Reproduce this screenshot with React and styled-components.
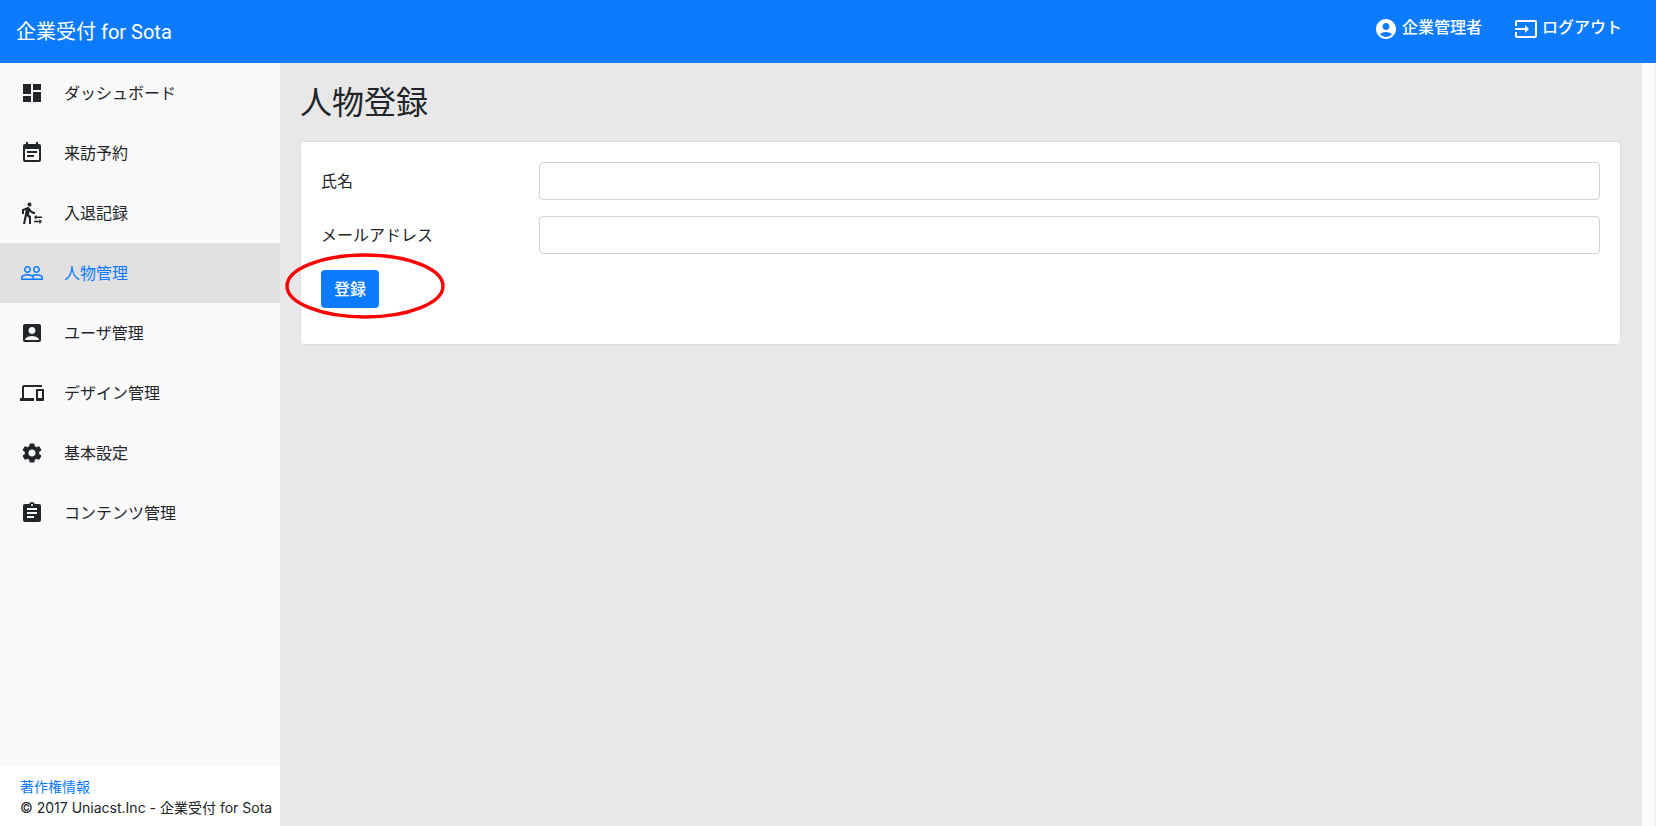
import { useState } from "react";
import styled, { createGlobalStyle } from "styled-components";
import {
  MdAccountBox,
  MdAccountCircle,
  MdAssignment,
  MdDashboard,
  MdDevices,
  MdEventNote,
  MdInput,
  MdPeopleOutline,
  MdSettings,
  MdTransferWithinAStation,
} from "react-icons/md";

const Colors = {
  primary: "#0d7bff",
  text: "#212529",
  sidebar: "#f9f9f9",
  active: "#e0e0e0",
  page: "#e8e8e8",
  marker: "#ff0000",
};

const menu = [
  { label: "ダッシュボード", Icon: MdDashboard },
  { label: "来訪予約", Icon: MdEventNote },
  { label: "入退記録", Icon: MdTransferWithinAStation },
  { label: "人物管理", Icon: MdPeopleOutline, active: true },
  { label: "ユーザ管理", Icon: MdAccountBox },
  { label: "デザイン管理", Icon: MdDevices },
  { label: "基本設定", Icon: MdSettings },
  { label: "コンテンツ管理", Icon: MdAssignment },
];

function App() {
  const [name, setName] = useState("");
  const [email, setEmail] = useState("");

  const handleSubmit = (e) => {
    e.preventDefault();
  };

  return (
    <Page>
      <GlobalStyle />
      <Header>
        <Brand href="#">企業受付 for Sota</Brand>
        <HeaderNav>
          <HeaderLink href="#">
            <MdAccountCircle />
            企業管理者
          </HeaderLink>
          <HeaderLink href="#">
            <MdInput />
            ログアウト
          </HeaderLink>
        </HeaderNav>
      </Header>

      <Body>
        <Sidebar>
          <nav>
            {menu.map(({ label, Icon, active }) => (
              <MenuLink key={label} href="#" $active={active}>
                <Icon />
                {label}
              </MenuLink>
            ))}
          </nav>
          <Footer>
            <a href="#">著作権情報</a>
            <div>© 2017 Uniacst.Inc - 企業受付 for Sota</div>
          </Footer>
        </Sidebar>

        <Main>
          <h1>人物登録</h1>
          <Card onSubmit={handleSubmit}>
            <FormRow>
              <label htmlFor="name">氏名</label>
              <TextInput
                id="name"
                type="text"
                value={name}
                onChange={(e) => setName(e.target.value)}
              />
            </FormRow>
            <FormRow>
              <label htmlFor="email">メールアドレス</label>
              <TextInput
                id="email"
                type="email"
                value={email}
                onChange={(e) => setEmail(e.target.value)}
              />
            </FormRow>
            <Actions>
              <SubmitButton type="submit">登録</SubmitButton>
              <Marker viewBox="0 0 160 66" aria-hidden="true">
                <ellipse cx="80" cy="33" rx="78" ry="31" />
              </Marker>
            </Actions>
          </Card>
        </Main>
        <ScrollTrack />
      </Body>
    </Page>
  );
}

const GlobalStyle = createGlobalStyle`
  * {
    box-sizing: border-box;
  }
  body {
    margin: 0;
    color: ${Colors.text};
    font-family: Inter, "Noto Sans CJK JP", sans-serif;
    font-size: 16px;
    line-height: 24px;
  }
  a {
    color: ${Colors.primary};
    text-decoration: none;
  }
`;

const Page = styled.div`
  display: flex;
  flex-direction: column;
  height: 100vh;
`;

const Header = styled.header`
  display: flex;
  justify-content: space-between;
  height: 63px;
  padding: 0 18px 0 16px;
  background: ${Colors.primary};
`;

const Brand = styled.a`
  padding-top: 1px;
  color: white;
  font-family: Roboto, "Noto Sans CJK JP", sans-serif;
  font-size: 20px;
  line-height: 62px;
`;

const HeaderNav = styled.nav`
  display: flex;
  align-items: flex-start;
  padding-top: 15px;
`;

const HeaderLink = styled.a`
  padding: 0 16px;
  color: white;
  font-weight: 500;

  svg {
    width: 24px;
    height: 24px;
    margin-right: 4px;
    vertical-align: -8px;
  }
`;

const Body = styled.div`
  display: flex;
  flex: 1;
  min-height: 0;
`;

const Sidebar = styled.aside`
  display: flex;
  flex-direction: column;
  justify-content: space-between;
  flex: 0 0 280px;
  background: ${Colors.sidebar};
`;

const MenuLink = styled.a`
  display: flex;
  align-items: center;
  gap: 20px;
  height: 60px;
  padding: 0 20px;
  color: ${(props) => (props.$active ? Colors.primary : Colors.text)};
  background: ${(props) => (props.$active ? Colors.active : "transparent")};

  svg {
    width: 24px;
    height: 24px;
  }
`;

const Footer = styled.footer`
  padding: 10px 0 8px 20px;
  background: white;
  font-size: 14px;
  line-height: 21px;
  white-space: nowrap;
`;

const Main = styled.main`
  flex: 1;
  min-width: 0;
  padding: 20px;
  background: ${Colors.page};

  h1 {
    margin: 0 0 18px;
    font-size: 32px;
    font-weight: 400;
    line-height: 40px;
  }
`;

const Card = styled.form`
  padding: 20px 20px 36px;
  background: white;
  border: 1px solid #dfdfdf;
  border-radius: 4px;
`;

const FormRow = styled.div`
  display: flex;
  align-items: center;
  margin: 0 -15px 16px;
  padding-right: 15px;

  label {
    flex: 0 0 calc((100% + 15px) / 6);
    padding: 0 15px;
  }
`;

const TextInput = styled.input`
  flex: 1;
  min-width: 0;
  height: 38px;
  margin-left: 15px;
  padding: 6px 12px;
  color: ${Colors.text};
  font: inherit;
  background: white;
  border: 1px solid #ced4da;
  border-radius: 4px;
`;

const Actions = styled.div`
  position: relative;
  display: flex;
`;

const SubmitButton = styled.button`
  height: 38px;
  padding: 0 13px;
  color: white;
  font: inherit;
  font-weight: 500;
  background: ${Colors.primary};
  border: 0;
  border-radius: 4px;
`;

/* ring around the submit button */
const Marker = styled.svg`
  position: absolute;
  top: -17px;
  left: -36px;
  width: 160px;
  height: 66px;
  pointer-events: none;

  ellipse {
    fill: none;
    stroke: ${Colors.marker};
    stroke-width: 3.4;
  }
`;

const ScrollTrack = styled.div`
  flex: 0 0 15px;
  background: #fafafa;
  border-left: 1px solid #e8e8e8;
  border-right: 1px solid #ededed;
`;

export default App;
